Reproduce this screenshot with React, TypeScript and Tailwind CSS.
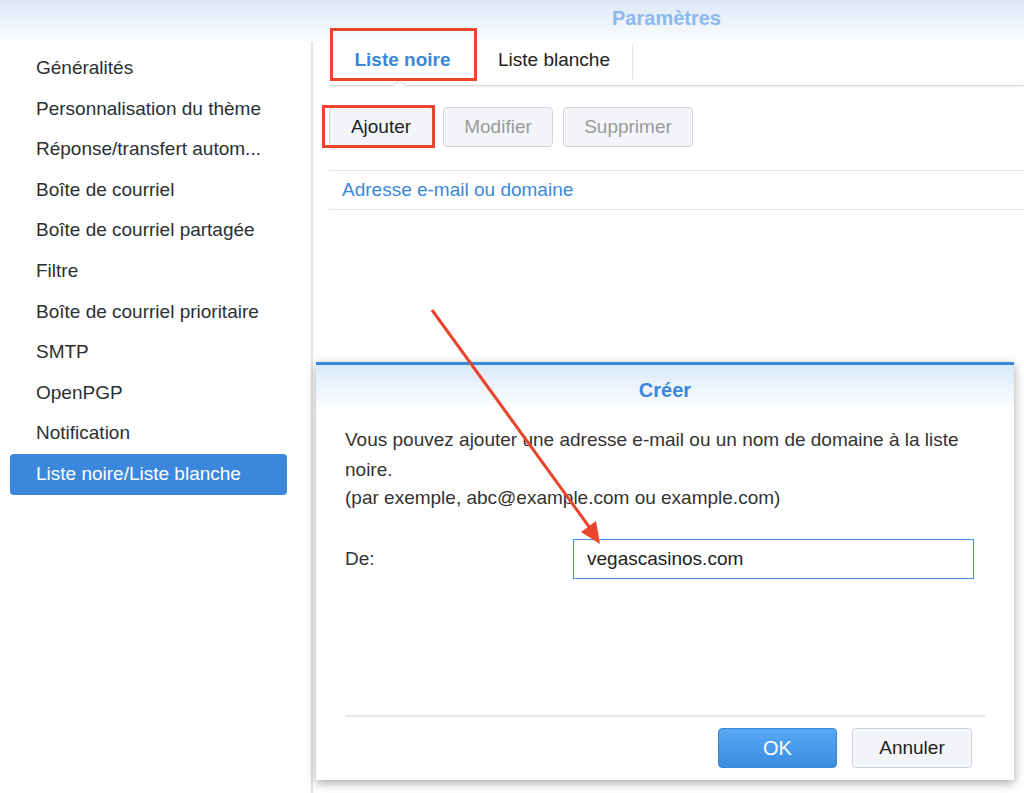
import React from 'react';

const menu = [
  'Généralités',
  'Personnalisation du thème',
  'Réponse/transfert autom...',
  'Boîte de courriel',
  'Boîte de courriel partagée',
  'Filtre',
  'Boîte de courriel prioritaire',
  'SMTP',
  'OpenPGP',
  'Notification',
  'Liste noire/Liste blanche',
];

function Sidebar() {
  return (
    <div className="w-[313px] shrink-0 pt-[42px] flex">
      <div className="flex-1 border-r-2 border-[#e4e4e4] pt-[6px]">
        {menu.map((item) => {
          const active = item === 'Liste noire/Liste blanche';
          return (
            <div
              key={item}
              className={
                active
                  ? 'ml-[10px] w-[277px] h-[40.6px] flex items-center pl-[26px] rounded-[4px] bg-[#3a87dc] text-white'
                  : 'ml-[10px] w-[277px] h-[40.6px] flex items-center pl-[26px] text-[#2b2f33]'
              }
            >
              <span className="text-[19px]">{item}</span>
            </div>
          );
        })}
      </div>
    </div>
  );
}

function Main() {
  return (
    <div className="flex-1 flex flex-col">
      <div className="h-[36px] flex items-center justify-center">
        <span className="text-[20px] font-bold text-[#8ab9ee] mr-[4px]">Paramètres</span>
      </div>
      {/* tabs */}
      <div className="relative ml-[16px] h-[50px] flex items-center border-b border-[#d9d9d9] shadow-[0_1px_2px_rgba(0,0,0,0.08)]">
        <div className="w-[147px] h-full flex items-center justify-center">
          <span className="text-[19px] font-bold text-[#3a87dc]">Liste noire</span>
        </div>
        <div className="w-[156px] h-full flex items-center justify-center">
          <span className="text-[19px] text-[#222]">Liste blanche</span>
        </div>
        <div className="w-px h-[35px] bg-[#dde5ee] mt-[2px]" />
        <div className="absolute left-[66px] bottom-[-5px] w-[9px] h-[9px] rotate-45 bg-white border-l border-t border-[#d9d9d9]" />
      </div>
      {/* toolbar */}
      <div className="ml-[16px] mt-[21px] h-[40px] flex gap-[10px]">
        <button className="w-[104px] h-[40px] rounded-[4px] border border-[#c9d2dc] bg-[#f3f5f8] text-[19px] text-[#222]">
          Ajouter
        </button>
        <button className="w-[110px] h-[40px] rounded-[4px] border border-[#cfd6de] bg-[#f3f5f8] text-[19px] text-[#9a9a9a]">
          Modifier
        </button>
        <button className="w-[130px] h-[40px] rounded-[4px] border border-[#cfd6de] bg-[#f3f5f8] text-[19px] text-[#9a9a9a]">
          Supprimer
        </button>
      </div>
      {/* grid header */}
      <div className="ml-[16px] mt-[23px] h-[40px] flex items-center border-t border-b border-[#e1e7ee] pl-[13px]">
        <span className="text-[19px] text-[#3a87dc]">Adresse e-mail ou domaine</span>
      </div>
    </div>
  );
}

function CreateDialog() {
  return (
    <div className="absolute left-[316px] top-[362px] w-[698px] h-[418px] bg-white border-t-[3px] border-[#3a87dc] shadow-[0_3px_10px_rgba(0,0,0,0.35)] flex flex-col">
      <div className="h-[46px] flex items-center justify-center bg-[linear-gradient(#dbe9f8,#ffffff)]">
        <span className="text-[20px] font-bold text-[#3a87dc] mt-[4px]">Créer</span>
      </div>
      <div className="px-[29px] pt-[14px] text-[19px] text-[#333]">
        <p className="leading-[30px] w-[640px]">
          Vous pouvez ajouter une adresse e-mail ou un nom de domaine à la liste noire.
        </p>
        <p className="leading-[26px]">(par exemple, abc@example.com ou example.com)</p>
        <div className="mt-[28px] flex items-center">
          <span className="w-[228px]">De:</span>
          <div className="w-[401px] h-[40px] border-[1.5px] border-[#4a90e2] flex items-center pl-[13px] text-[#222]">
            vegascasinos.com
          </div>
        </div>
      </div>
      <div className="flex-1" />
      <div className="mx-[29px] border-t-2 border-[#e6e6e6] h-[65px] flex items-start justify-end gap-[15px] pt-[11px] pr-[13px]">
        <button className="w-[119px] h-[40px] rounded-[4px] border border-[#3a86d8] bg-[linear-gradient(#58a8f3,#3b8ce2)] text-[20px] text-white">
          OK
        </button>
        <button className="w-[120px] h-[40px] rounded-[4px] border border-[#c9d2dc] bg-[#f3f5f8] text-[19px] text-[#222]">
          Annuler
        </button>
      </div>
    </div>
  );
}

export default function App() {
  return (
    <div className="relative w-[1024px] h-[793px] overflow-hidden bg-[linear-gradient(#dce8f6,#ffffff_46px)] font-['Liberation_Sans',Arial,sans-serif]">
      <div className="flex h-full">
        <Sidebar />
        <Main />
      </div>
      <CreateDialog />

      {/* annotation boxes */}
      <div className="absolute left-[330px] top-[28px] w-[147px] h-[53px] border-[3px] border-[#e8452c]" />
      <div className="absolute left-[322px] top-[105px] w-[113px] h-[43px] border-[3px] border-[#e8452c]" />

      {/* annotation arrow */}
      <svg className="absolute left-0 top-0 pointer-events-none" width="1024" height="793">
        <line x1="432" y1="310" x2="590" y2="528" stroke="#e8452c" strokeWidth="3" />
        <polygon points="600,544 581,532 596,521" fill="#e8452c" />
      </svg>
    </div>
  );
}
